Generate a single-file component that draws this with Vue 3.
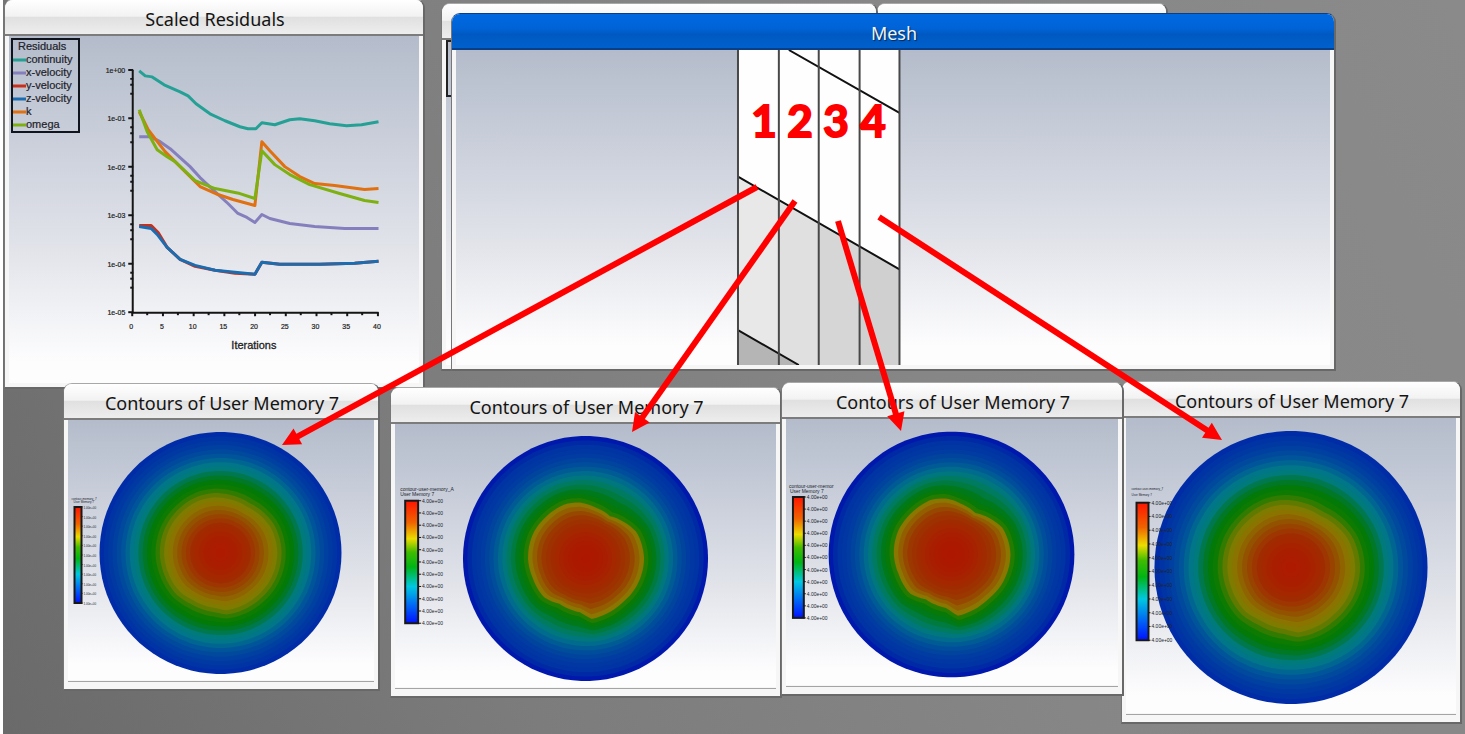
<script setup>
const series = [
  { name: 'continuity', color: '#25a095', points: '139,71 145,76 152,77 164,85 180,92 188,96 196,104 210,114 225,121 240,127 248,129 256,129 262,123 275,125 290,120 300,119 315,121 330,124 347,126 362,125 379,122' },
  { name: 'x-velocity', color: '#8580bd', points: '139,137 150,137 160,142 170,149 190,167 200,178 215,192 228,204 238,214 247,218 255,223 262,215 270,219 290,224 315,227 345,229 379,229' },
  { name: 'y-velocity', color: '#c9301c', points: '139,226 151,226 158,233 167,248 180,260 195,267 215,271 235,274 255,275 262,263 280,265 320,265 355,264 379,262' },
  { name: 'z-velocity', color: '#1a6db0', points: '139,227 151,229 157,235 167,248 180,260 195,266 215,271 235,273 255,275 262,263 280,265 320,265 355,264 379,262' },
  { name: 'k', color: '#e07010', points: '139,112 148,130 165,152 185,172 200,187 218,195 233,200 255,206 262,142 270,151 285,167 300,177 315,184 335,186 365,190 379,189' },
  { name: 'omega', color: '#7db010', points: '139,110 147,132 157,150 167,157 175,162 195,181 215,189 240,194 255,199 262,151 275,165 290,175 310,185 340,194 365,201 379,203' },
]

const yTicks = ['1e+00', '1e-01', '1e-02', '1e-03', '1e-04', '1e-05'].map((label, i) => ({
  label,
  y: 70 + i * 48.6,
}))
const yMinor = yTicks.slice(0, 5).flatMap((t) => [9, 15, 24].map((d) => t.y + d))
const xTicks = [0, 5, 10, 15, 20, 25, 30, 35, 40].map((value) => ({ value, x: 132 + value * 6.16 }))
const xMinor = xTicks.slice(0, 8).map((t) => t.x + 15)

// Colour by radius fraction, for an even field and for one with a sharp core.
const smoothPalette = [
  [0, 176, 24, 0], [0.14, 170, 30, 0], [0.26, 160, 44, 0], [0.35, 148, 78, 0], [0.41, 140, 108, 0], [0.45, 138, 124, 0],
  [0.5, 96, 122, 0], [0.56, 16, 124, 0], [0.62, 0, 120, 10], [0.68, 0, 120, 80], [0.72, 0, 122, 130], [0.76, 0, 116, 138],
  [0.81, 0, 88, 152], [0.88, 0, 66, 160], [0.96, 0, 52, 164], [1, 0, 44, 168],
]
const corePalette = [
  [0, 174, 22, 0], [0.16, 170, 28, 0], [0.28, 162, 42, 0], [0.37, 154, 58, 0], [0.42, 148, 88, 0],
  [0.465, 138, 118, 0], [0.485, 70, 124, 0], [0.51, 12, 122, 0], [0.56, 0, 120, 16], [0.63, 0, 124, 86],
  [0.69, 0, 118, 134], [0.76, 0, 86, 152], [0.84, 0, 62, 160], [0.95, 0, 48, 164], [1, 0, 24, 172],
]

// Core outline: angle in degrees clockwise from the right, relative deviation.
const outline = [
  [0, 0.03], [30, 0.02], [50, 0.01], [75, 0.05], [84, 0.07], [95, -0.05], [120, -0.08], [137, 0], [160, -0.01],
  [180, 0.01], [205, 0.02], [225, 0.01], [250, 0.02], [264, -0.01], [280, -0.08], [300, -0.14], [316, -0.07],
  [333, 0.01], [360, 0.03],
]

function lerpTable(table, x) {
  let i = 1
  while (i < table.length - 1 && table[i][0] < x) i++
  const a = table[i - 1]
  const b = table[i]
  const f = (x - a[0]) / (b[0] - a[0])
  return a.slice(1).map((v, n) => v + (b[n + 1] - v) * f)
}

function rings({ cx, cy, r, wobble, palette }) {
  const count = 28
  const result = []
  for (let i = count; i > 0; i--) {
    const t = i / count
    const weight = wobble * Math.exp(-(((t - 0.46) / 0.13) ** 2))
    const pts = []
    for (let a = 0; a < 360; a += 4) {
      const rad = (a * Math.PI) / 180
      const rr = r * t * (1 + weight * lerpTable(outline, a)[0])
      pts.push(`${(cx + rr * Math.cos(rad)).toFixed(1)},${(cy + rr * Math.sin(rad)).toFixed(1)}`)
    }
    const rgb = lerpTable(palette, t).map(Math.round)
    result.push({ points: pts.join(' '), fill: `rgb(${rgb.join(',')})` })
  }
  return result
}

const contours = [
  {
    id: 'c1', view: '69 420 305 260', cx: 221, cy: 553, r: 121, wobble: 0.35, palette: smoothPalette,
    bar: { x: 75, y: 507, w: 7, h: 96 }, labelX: 84, labelSize: 3, label: '1.00e+00',
    head: [{ x: 72, y: 500, size: 3, text: 'contour-memory_7' }, { x: 74, y: 503, size: 3, text: 'User Memory 7' }],
  },
  {
    id: 'c2', view: '396 423 380 264', cx: 586, cy: 558, r: 123, wobble: 1, palette: corePalette,
    bar: { x: 405, y: 500, w: 13, h: 123 }, labelX: 422, labelSize: 5, label: '4.00e+00',
    head: [{ x: 400, y: 490, size: 5, text: 'contour-user-memory_A' }, { x: 400, y: 495, size: 5, text: 'User Memory 7' }],
  },
  {
    id: 'c3', view: '784 418 335 267', cx: 951, cy: 554, r: 124, wobble: 1.15, palette: corePalette,
    bar: { x: 791, y: 496, w: 11, h: 122 }, labelX: 805, labelSize: 5, label: '4.00e+00',
    head: [{ x: 787, y: 487, size: 5, text: 'contour-user-memor' }, { x: 788, y: 492, size: 5, text: 'User Memory 7' }],
  },
  {
    id: 'c4', view: '1127 417 328 296', cx: 1291, cy: 567, r: 137, wobble: 0.45, palette: smoothPalette,
    bar: { x: 1136, y: 502, w: 12, h: 138 }, labelX: 1151, labelSize: 5, label: '4.00e+00',
    head: [{ x: 1131, y: 489, size: 3, text: 'contour-user-memory_7' }, { x: 1131, y: 495, size: 3, text: 'User Memory 7' }],
  },
].map((c) => ({
  ...c,
  rings: rings(c),
  labels: Array.from({ length: 11 }, (_, i) => c.bar.y + (c.bar.h * i) / 10),
}))

const meshColumns = [737, 778, 818, 859, 899]
const callouts = [
  { n: 1, x: 764, from: [757, 187], to: [282, 445] },
  { n: 2, x: 800, from: [795, 201], to: [632, 432] },
  { n: 3, x: 836, from: [838, 221], to: [901, 431] },
  { n: 4, x: 873, from: [879, 217], to: [1222, 440] },
].map((c) => {
  const dx = c.to[0] - c.from[0]
  const dy = c.to[1] - c.from[1]
  const len = Math.hypot(dx, dy)
  const ux = dx / len
  const uy = dy / len
  const bx = c.to[0] - ux * 18
  const by = c.to[1] - uy * 18
  return {
    ...c,
    end: [bx + ux, by + uy],
    head: `${c.to[0]},${c.to[1]} ${bx - uy * 9},${by + ux * 9} ${bx + uy * 9},${by - ux * 9}`,
  }
})
</script>

<template>
  <main class="desktop">
    <section class="window residuals">
      <h2 class="title">Scaled Residuals</h2>
      <div class="body">
        <svg class="plot" viewBox="9 36 410 348" aria-label="Scaled residuals by iteration">
          <path class="axis" d="M132.5 70V313.5H379" />
          <g v-for="t in yTicks" :key="t.label">
            <line class="axis" x1="128" x2="133" :y1="t.y" :y2="t.y" />
            <text class="tick" x="125" :y="t.y + 3" text-anchor="end">{{ t.label }}</text>
          </g>
          <line v-for="y in yMinor" :key="y" class="axis" x1="130" x2="133" :y1="y" :y2="y" />
          <g v-for="t in xTicks" :key="t.value">
            <line class="axis" :x1="t.x" :x2="t.x" y1="313" y2="317" />
            <text class="tick" :x="t.x - 1" y="330" text-anchor="middle">{{ t.value }}</text>
          </g>
          <line v-for="x in xMinor" :key="x" class="axis" :x1="x" :x2="x" y1="313" y2="316" />
          <polyline v-for="s in series" :key="s.name" class="curve" :points="s.points" :stroke="s.color" />
          <text class="axis-name" x="254" y="350" text-anchor="middle">Iterations</text>
        </svg>
        <div class="legend">
          <div class="legend-title">Residuals</div>
          <div v-for="s in series" :key="s.name" class="legend-row">
            <svg class="swatch" viewBox="0 0 13 4"><path d="M0 2H13" :stroke="s.color" stroke-width="3" /></svg>
            <span>{{ s.name }}</span>
          </div>
        </div>
      </div>
    </section>

    <section class="window behind-right"><div class="title"></div></section>
    <section class="window behind-left">
      <div class="title"></div>
      <div class="body"><div class="hidden-legend"></div></div>
    </section>

    <section class="window mesh active">
      <h2 class="title">Mesh</h2>
      <div class="body">
        <svg class="plot" viewBox="457 50 871 316" aria-label="Mesh">
          <rect x="737" y="50" width="162" height="316" fill="#fefefe" />
          <path d="M737 177L778 200V366H737Z" fill="#e8e8e8" />
          <path d="M778 200L818 223V366H778Z" fill="#e0e0e0" />
          <path d="M818 223L859 247V366H818Z" fill="#d6d6d6" />
          <path d="M859 247L899 270V366H859Z" fill="#d0d0d0" />
          <path d="M737 331L798 366H737Z" fill="#b5b5b5" />
          <path class="mesh-edge" d="M788 50L899 113M737 177L899 270M737 331L798 366" />
          <line v-for="x in meshColumns" :key="x" class="mesh-column" :x1="x" :x2="x" y1="50" y2="366" />
        </svg>
      </div>
    </section>

    <section v-for="c in contours" :key="c.id" class="window contour" :class="c.id">
      <h2 class="title">Contours of User Memory 7</h2>
      <div class="body">
        <svg class="plot" :viewBox="c.view" aria-label="Contours of User Memory 7">
          <defs>
            <linearGradient :id="'scale-' + c.id" x1="0" y1="0" x2="0" y2="1">
              <stop offset="0" stop-color="#ff1400" />
              <stop offset="0.18" stop-color="#f06400" />
              <stop offset="0.31" stop-color="#ecdc00" />
              <stop offset="0.42" stop-color="#40bc00" />
              <stop offset="0.54" stop-color="#00b414" />
              <stop offset="0.7" stop-color="#00c8e0" />
              <stop offset="0.84" stop-color="#0070f4" />
              <stop offset="1" stop-color="#0010ff" />
            </linearGradient>
          </defs>
          <polygon v-for="(ring, i) in c.rings" :key="i" :points="ring.points" :fill="ring.fill" />
          <text v-for="h in c.head" :key="h.y" class="scale-text" :x="h.x" :y="h.y" :font-size="h.size">{{ h.text }}</text>
          <rect
            class="scale-bar" :x="c.bar.x" :y="c.bar.y" :width="c.bar.w" :height="c.bar.h"
            :fill="`url(#scale-${c.id})`"
          />
          <g v-for="y in c.labels" :key="y">
            <line class="scale-tick" :x1="c.bar.x + c.bar.w" :x2="c.labelX - 1" :y1="y" :y2="y" />
            <text class="scale-text" :x="c.labelX" :y="y + 2" :font-size="c.labelSize">{{ c.label }}</text>
          </g>
        </svg>
      </div>
      <div class="status"></div>
    </section>

    <svg class="callouts" width="1465" height="734" viewBox="0 0 1465 734" aria-label="Callouts">
      <g v-for="c in callouts" :key="c.n">
        <text class="number" :x="c.x" y="137" text-anchor="middle">{{ c.n }}</text>
        <line class="arrow" :x1="c.from[0]" :y1="c.from[1]" :x2="c.end[0]" :y2="c.end[1]" />
        <polygon :points="c.head" fill="#ff0000" />
      </g>
    </svg>
  </main>
</template>

<style>
body {
  margin: 0;
}
</style>

<style scoped>
.desktop {
  position: relative;
  box-sizing: border-box;
  min-height: 100vh;
  overflow: hidden;
  border-left: 3px solid #fff;
  background: linear-gradient(65deg, #6a6a6a 0%, #7c7c7c 30%, #868686 60%, #8a8a8a 100%);
  font-family: "Noto Sans", "Open Sans", sans-serif;
}

.window {
  position: absolute;
  box-sizing: border-box;
  display: flex;
  flex-direction: column;
  border: 1px solid #777;
  border-top-color: #a8a8a8;
  border-right: 2px solid #686868;
  border-bottom: 2px solid #686868;
  border-radius: 9px 9px 0 0;
  background: #f6f6f6;
  overflow: hidden;
}

.title {
  box-sizing: border-box;
  flex: none;
  height: 36px;
  margin: 0;
  padding-left: 2px;
  border-bottom: 2px solid #7c7c7c;
  background: linear-gradient(#fff 0%, #f2f2f2 48%, #e0e0e0 50%, #ededed 100%);
  color: #141414;
  font-size: 18px;
  font-weight: 400;
  line-height: 38px;
  text-align: center;
}

.body {
  position: relative;
  flex: 1;
  min-height: 0;
  margin: 0 4px 4px;
  background: linear-gradient(#b4bccb 0%, #ccd1dc 33%, #e2e4ea 62%, #fdfdfe 94%);
}

.plot {
  display: block;
  width: 100%;
  height: 100%;
}

.residuals { left: 1px; top: -1px; width: 421px; height: 390px; }
.behind-left { left: 438px; top: 3px; width: 437px; height: 368px; }
.behind-right { left: 873px; top: 3px; width: 292px; height: 100px; }
.mesh { left: 448px; top: 13px; width: 885px; height: 358px; }
.c1 { left: 60px; top: 383px; width: 317px; height: 308px; }
.c2 { left: 387px; top: 387px; width: 392px; height: 311px; }
.c3 { left: 778px; top: 382px; width: 343px; height: 314px; z-index: 1; }
.c4 { left: 1118px; top: 381px; width: 341px; height: 343px; }

.active {
  border-top-color: #0a3f88;
}

.active .title {
  border-bottom-color: #0a3f88;
  background: linear-gradient(#0068e0 0%, #0064d8 40%, #0059c2 60%, #0060cc 100%);
  color: #eef4fb;
  text-shadow: 1px 1px 1px #06264f;
}

.contour .body {
  margin-bottom: 0;
}

.status {
  flex: none;
  height: 7px;
  margin: 1px 4px 0;
  border-top: 1px solid #a4a4a4;
}

.axis {
  fill: none;
  stroke: #151515;
  stroke-width: 2;
}

.curve {
  fill: none;
  stroke-width: 3;
  stroke-linejoin: round;
}

.tick {
  fill: #222;
  font: 7px "Liberation Sans", sans-serif;
  stroke: #222;
  stroke-width: 0.2;
}

.axis-name {
  fill: #222;
  stroke: #222;
  stroke-width: 0.3;
  font: 11px "Liberation Sans", sans-serif;
}

.legend {
  position: absolute;
  left: 2px;
  top: 2px;
  box-sizing: border-box;
  width: 69px;
  border: 2px solid #10141c;
  color: #1e222a;
  font: 11px/13px "Liberation Sans", sans-serif;
  -webkit-text-stroke: 0.2px #1e222a;
}

.legend-title {
  padding-left: 5px;
}

.legend-row {
  display: flex;
  align-items: center;
}

.swatch {
  flex: none;
  width: 13px;
  height: 4px;
}

.hidden-legend {
  width: 20px;
  height: 53px;
  border: 2px solid #222;
}

.mesh-edge {
  fill: none;
  stroke: #111;
  stroke-width: 2;
}

.mesh-column {
  stroke: #484848;
  stroke-width: 2;
}

.scale-bar {
  stroke: #181818;
  stroke-width: 2;
}

.scale-tick {
  stroke: #181818;
  stroke-width: 1;
}

.scale-text {
  fill: #20242c;
  font-family: "Liberation Sans", sans-serif;
}

.callouts {
  position: absolute;
  left: -3px;
  top: 0;
  z-index: 2;
  pointer-events: none;
}

.number {
  fill: #ff0000;
  stroke: #ff0000;
  stroke-width: 2;
  font: bold 44px Lato, sans-serif;
}

.arrow {
  stroke: #ff0000;
  stroke-width: 6;
}
</style>
